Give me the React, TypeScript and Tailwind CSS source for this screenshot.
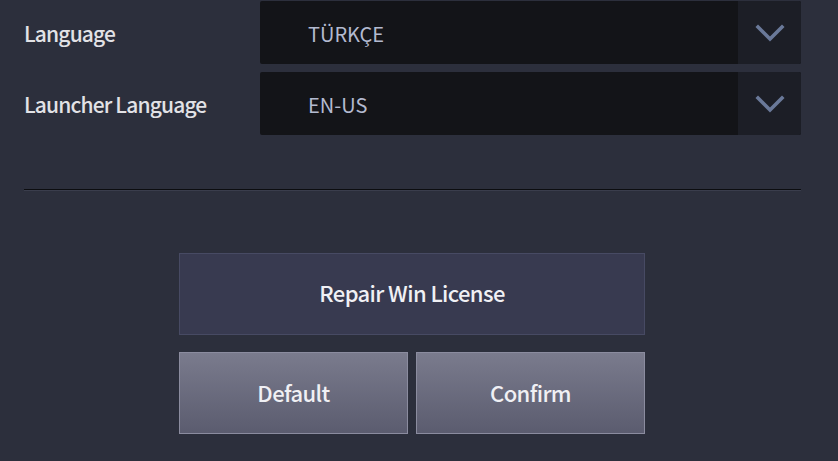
const languages = [
  { label: "Language", value: "TÜRKÇE" },
  { label: "Launcher Language", value: "EN-US" },
];

function Chevron() {
  return (
    <svg width="30" height="22" viewBox="0 0 30 22" fill="none">
      <polyline
        points="3,4 15,16 27,4"
        stroke="#6a7999"
        strokeWidth="3.6"
        strokeLinecap="square"
      />
    </svg>
  );
}

function Select({ value }: { value: string }) {
  return (
    <div className="flex h-[63px] w-[541px] overflow-hidden rounded-[2px] bg-[#131418]">
      <div className="flex flex-1 items-center pl-[48px] pt-[3px] text-[20px] text-[#b3bad0]">
        {value}
      </div>
      <div className="flex w-[63px] items-center justify-center bg-[#1c1e26] pt-[2px]">
        <Chevron />
      </div>
    </div>
  );
}

export default function App() {
  return (
    <div
      className="h-[461px] w-[838px] bg-[#2c2f3c] pl-[24px] pr-[37px] pt-[1px]"
      style={{ fontFamily: "'Noto Sans CJK KR', 'Noto Sans', sans-serif" }}
    >
      {/* Language rows */}
      <div className="flex flex-col gap-[8px]">
        {languages.map((row) => (
          <div key={row.label} className="flex items-center">
            <div className="w-[236px] pt-[3px] text-[21px] font-medium tracking-[-0.85px] text-[#e2e2e6]">
              {row.label}
            </div>
            <Select value={row.value} />
          </div>
        ))}
      </div>

      {/* Divider */}
      <div className="mt-[54px] h-[2px] w-[777px] border-b border-[#3a3d4c] bg-[#0c0d10]" />

      {/* Actions */}
      <div className="mt-[62px] ml-[155px] flex w-[466px] flex-col gap-[17px] text-[22px] font-medium text-[#f0f0f4] [text-shadow:1px_2px_2px_rgba(0,0,0,0.5)]">
        <button className="flex h-[82px] items-center justify-center border border-[#474a63] bg-[#383a50] pb-[3px] tracking-[-0.6px]">
          Repair Win License
        </button>
        <div className="flex gap-[8px]">
          <button className="flex h-[82px] flex-1 items-center justify-center border border-[#8b8c9f] bg-gradient-to-b from-[#7a7b8d] to-[#5b5c6f] pb-[2px] tracking-[-0.6px]">
            Default
          </button>
          <button className="flex h-[82px] flex-1 items-center justify-center border border-[#8b8c9f] bg-gradient-to-b from-[#7a7b8d] to-[#5b5c6f] pb-[2px] tracking-[-0.6px]">
            Confirm
          </button>
        </div>
      </div>
    </div>
  );
}
